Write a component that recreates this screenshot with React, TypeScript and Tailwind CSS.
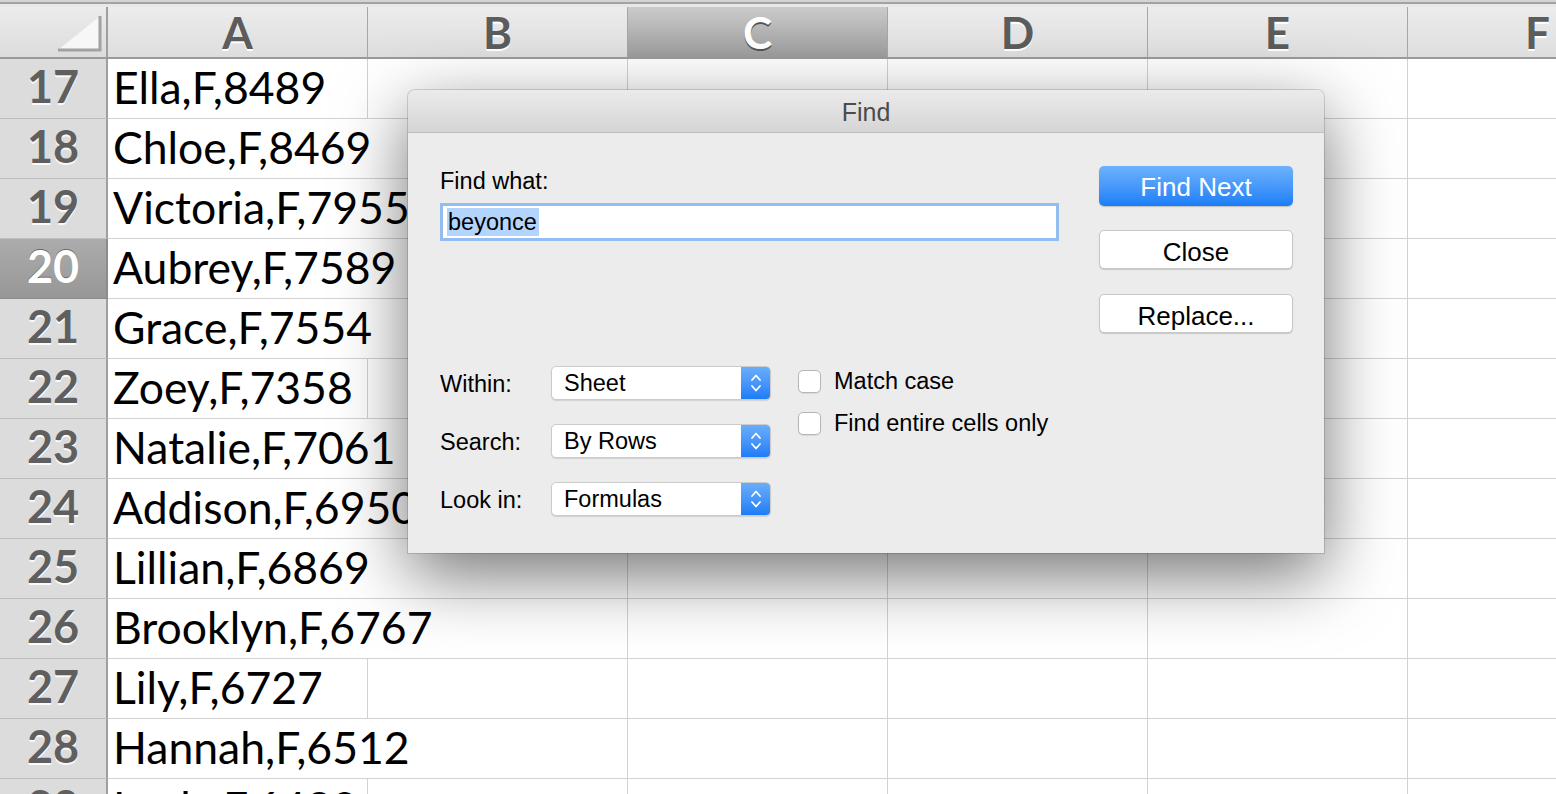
import React from "react";

const cols = ["A", "B", "C", "D", "E", "F"];

const rows = [
  { n: 17, text: "Ella,F,8489", over: false },
  { n: 18, text: "Chloe,F,8469", over: true },
  { n: 19, text: "Victoria,F,7955", over: true },
  { n: 20, text: "Aubrey,F,7589", over: true },
  { n: 21, text: "Grace,F,7554", over: true },
  { n: 22, text: "Zoey,F,7358", over: false },
  { n: 23, text: "Natalie,F,7061", over: true },
  { n: 24, text: "Addison,F,6950", over: true },
  { n: 25, text: "Lillian,F,6869", over: true },
  { n: 26, text: "Brooklyn,F,6767", over: true },
  { n: 27, text: "Lily,F,6727", over: false },
  { n: 28, text: "Hannah,F,6512", over: true },
  { n: 29, text: "Layla,F,6428", over: false },
];

export default function App() {
  return (
    <div className="relative w-[1556px] h-[794px] overflow-hidden bg-white font-['Lato','Open_Sans',sans-serif]">
      {/* top strip */}
      <div className="h-[7px] bg-[#e8e8e8] flex flex-col">
        <div className="h-[2px] bg-[#d4d4d4]" />
        <div className="h-[2px] bg-[#a3a3a3]" />
      </div>

      {/* column headers */}
      <div className="flex h-[52px] border-b-2 border-[#9a9a9a]">
        <div className="w-[108px] shrink-0 border-r-2 border-[#9f9f9f] bg-linear-to-b from-[#ececec] to-[#dcdcdc] flex items-end justify-end pr-[4px] pb-[5px]">
          <Corner />
        </div>
        {cols.map((c) => (
          <HeaderCell key={c} label={c} active={c === "C"} />
        ))}
      </div>

      {/* rows */}
      {rows.map((r) => (
        <div key={r.n} className="flex h-[60px]">
          <div
            className={
              r.n === 20
                ? "w-[108px] shrink-0 border-r-2 border-b border-[#8c8c8c] bg-linear-to-b from-[#acacac] to-[#979797] flex items-center justify-center pb-[4px] text-[45px] font-bold text-white [text-shadow:0_-1px_0_#6a6a6a]"
                : "w-[108px] shrink-0 border-r-2 border-[#9f9f9f] border-b border-b-[#bdbdbd] bg-[#dcdcdc] flex items-center justify-center pb-[4px] text-[45px] font-bold text-[#5f5f5f] [text-shadow:0_2px_0_#fafafa]"
            }
          >
            {r.n}
          </div>
          <div
            className={
              "w-[260px] shrink-0 border-b border-[#d2d2d2] flex items-center pl-[5px] pb-[3px] text-[44.5px] text-black whitespace-nowrap " +
              (r.over ? "" : "border-r")
            }
          >
            {r.text}
          </div>
          <div className="w-[260px] shrink-0 border-r border-b border-[#d2d2d2]" />
          <div className="w-[260px] shrink-0 border-r border-b border-[#d2d2d2]" />
          <div className="w-[260px] shrink-0 border-r border-b border-[#d2d2d2]" />
          <div className="w-[260px] shrink-0 border-r border-b border-[#d2d2d2]" />
          <div className="flex-1 border-b border-[#d2d2d2]" />
        </div>
      ))}

      <FindDialog />
    </div>
  );
}

function Corner() {
  return (
    <svg width="46" height="38" viewBox="0 0 46 38">
      <polygon points="2,36 44,36 44,2" fill="#f7f7f7" />
      <polyline points="2,36 44,36 44,2" fill="none" stroke="#a2a2a2" strokeWidth="3" />
    </svg>
  );
}

function HeaderCell({ label, active }: any) {
  const base =
    "w-[260px] shrink-0 border-r border-[#a6a6a6] flex items-center justify-center text-[44px] font-bold leading-none ";
  if (active) {
    return (
      <div className={base + "bg-linear-to-b from-[#cbcbcb] to-[#9c9c9c] text-white [text-shadow:0_2px_0_#555]"}>
        {label}
      </div>
    );
  }
  return (
    <div className={base + "bg-linear-to-b from-[#ececec] to-[#dedede] text-[#5c5c5c] [text-shadow:0_2px_0_#ffffff]"}>
      {label}
    </div>
  );
}

function FindDialog() {
  return (
    <div className="absolute left-[408px] top-[90px] z-20 w-[916px] h-[463px] rounded-t-[7px] bg-[#ececec] shadow-[0_0_0_1px_rgba(0,0,0,0.14),0_22px_70px_rgba(0,0,0,0.55)] font-['Liberation_Sans',Arial,sans-serif] text-black">
      <div className="h-[43px] rounded-t-[7px] bg-linear-to-b from-[#ebebeb] to-[#d5d5d5] border-b border-[#c0c0c0] flex items-center justify-center pt-[4px] text-[25px] text-[#4b4b4b]">
        Find
      </div>

      <div className="flex pl-[32px] pr-[31px] pt-[33px]">
        <div className="w-[619px]">
          <div className="mt-[2px] text-[23.5px] leading-[26px]">Find what:</div>
          <div className="mt-[9px] h-[38px] border-[3px] border-[#93bdf0] bg-white flex items-center pl-[4px]">
            <span className="bg-[#b3d4fd] text-[23.5px] leading-[28px] pl-[1px] pr-[2px]">beyonce</span>
          </div>

          <div className="mt-[125px] flex">
            <div className="flex flex-col gap-[24px]">
              <SelectRow label="Within:" value="Sheet" />
              <SelectRow label="Search:" value="By Rows" />
              <SelectRow label="Look in:" value="Formulas" />
            </div>
            <div className="ml-[27px] mt-[4px] flex flex-col gap-[19px]">
              <CheckRow label="Match case" />
              <CheckRow label="Find entire cells only" />
            </div>
          </div>
        </div>

        <div className="ml-auto w-[194px] flex flex-col">
          <button className="h-[40px] rounded-[5px] bg-linear-to-b from-[#6db2fb] to-[#1a7ef8] text-white text-[26px] pt-[2px] shadow-[0_1px_1px_rgba(0,0,0,0.2)]">
            Find Next
          </button>
          <button className="mt-[24px] h-[39px] rounded-[5px] bg-white border border-[#c6c6c6] text-[26px] pt-[2px] shadow-[0_1px_1px_rgba(0,0,0,0.15)]">
            Close
          </button>
          <button className="mt-[25px] h-[39px] rounded-[5px] bg-white border border-[#c6c6c6] text-[26px] pt-[2px] shadow-[0_1px_1px_rgba(0,0,0,0.15)]">
            Replace...
          </button>
        </div>
      </div>
    </div>
  );
}

function SelectRow({ label, value }: any) {
  return (
    <div className="flex items-center h-[34px]">
      <div className="w-[111px] text-[23.5px] pt-[3px]">{label}</div>
      <div className="w-[220px] h-[34px] flex rounded-[5px] bg-white border border-[#cbcbcb] shadow-[0_1px_1px_rgba(0,0,0,0.12)] overflow-hidden">
        <div className="flex-1 flex items-center pl-[12px] pt-[1px] text-[23.5px]">{value}</div>
        <div className="w-[29px] bg-linear-to-b from-[#6aaefa] to-[#1c7cf7] flex items-center justify-center">
          <svg width="12" height="22" viewBox="0 0 12 22" fill="none" stroke="white" strokeWidth="1.8" strokeLinecap="round" strokeLinejoin="round">
            <polyline points="2,8 6,3.5 10,8" />
            <polyline points="2,14 6,18.5 10,14" />
          </svg>
        </div>
      </div>
    </div>
  );
}

function CheckRow({ label }: any) {
  return (
    <div className="flex items-center h-[23px]">
      <div className="w-[23px] h-[23px] rounded-[5px] bg-white border border-[#b6b6b6] shadow-[0_1px_1px_rgba(0,0,0,0.08)]" />
      <div className="ml-[13px] pt-[1px] text-[23.5px]">{label}</div>
    </div>
  );
}
